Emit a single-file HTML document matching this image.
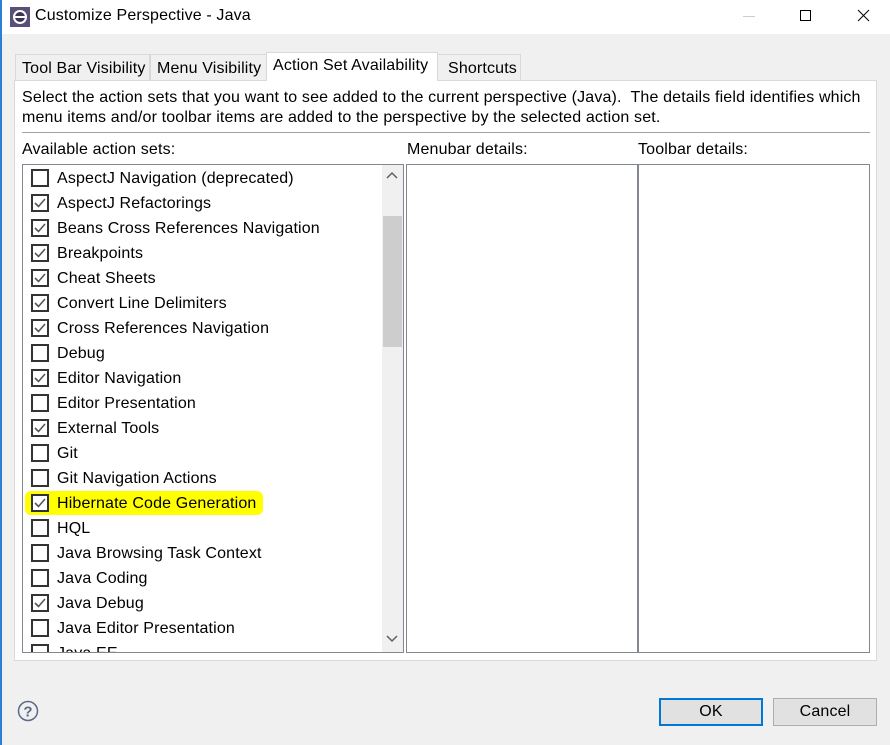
<!DOCTYPE html>
<html><head><meta charset="utf-8">
<style>
*{box-sizing:border-box;margin:0;padding:0}
body{width:890px;height:745px;background:#f0f0f0;font-family:"Liberation Sans","Noto Sans CJK SC",sans-serif;font-size:16px;letter-spacing:0.15px;color:#000;position:relative;overflow:hidden}
.abs{position:absolute}
.title{left:0;top:0;width:890px;height:34px;background:#fff}
.blue{left:0;top:0;width:2px;height:745px;background:#2b7fd6}
.tab{position:absolute;top:54px;height:27px;background:#f0f0f0;border:1px solid #d9d9d9;border-bottom:none;padding:5px 0 0 6px;white-space:nowrap}
.tab.sel{top:52px;height:29px;background:#fff;padding-top:4px;z-index:2}
.panel{left:14px;top:80px;width:863px;height:581px;background:#fff;border:1px solid #d9d9d9}
.row{position:absolute;left:31px;height:25px;white-space:nowrap}
.cb{position:absolute;left:0;top:0;width:18px;height:18px;border:2px solid #333;background:#fff}
.cb svg{position:absolute;left:0;top:0}
.lbl{position:absolute;left:26px;top:1px}
.btn{position:absolute;top:698px;width:104px;height:28px;background:#e1e1e1;border:1px solid #adadad;text-align:center;line-height:26px}
</style></head><body>
<div class="abs title"></div>
<div class="abs blue"></div>
<svg class="abs" style="left:10px;top:7px" width="20" height="20" viewBox="0 0 20 20"><rect x="0" y="0" width="20" height="20" fill="#5a4e7a"/><circle cx="10" cy="10" r="7" fill="#fff"/><circle cx="10" cy="10" r="5" fill="#3b3556"/><rect x="4" y="9" width="12" height="2" fill="#fff"/></svg>
<div class="abs" style="left:35px;top:7px;font-size:16px">Customize Perspective - Java</div>
<div class="abs" style="left:743px;top:16px;width:12px;height:1px;background:#ccc"></div>
<div class="abs" style="left:800px;top:10px;width:11px;height:11px;border:1px solid #000"></div>
<svg class="abs" style="left:857px;top:9px" width="13" height="13"><path d="M1 1L12 12M12 1L1 12" stroke="#000" stroke-width="1"/></svg>

<div class="tab" style="left:15px;width:135px">Tool Bar Visibility</div>
<div class="tab" style="left:150px;width:117px">Menu Visibility</div>
<div class="tab sel" style="left:266px;width:172px">Action Set Availability</div>
<div class="tab" style="left:437px;width:84px;padding-left:10px">Shortcuts</div>

<div class="abs panel"></div>
<div class="abs" style="left:22px;top:88px;line-height:20px;width:860px;white-space:nowrap">Select the action sets that you want to see added to the current perspective (Java).&nbsp; The details field identifies which<br>menu items and/or toolbar items are added to the perspective by the selected action set.</div>
<div class="abs" style="left:22px;top:132px;width:848px;height:1px;background:#a0a0a0"></div>
<div class="abs" style="left:22px;top:141px">Available action sets:</div>
<div class="abs" style="left:407px;top:141px">Menubar details:</div>
<div class="abs" style="left:638px;top:141px">Toolbar details:</div>

<div class="abs" style="left:22px;top:164px;width:382px;height:489px;border:1px solid #828790;background:#fff;overflow:hidden">
<div class="abs" style="left:359px;top:0;width:21px;height:487px;background:#f0f0f0"></div>
<div class="abs" style="left:360px;top:51px;width:19px;height:131px;background:#cdcdcd"></div>
<svg class="abs" style="left:363px;top:6px" width="12" height="8"><path d="M1 7L6 2L11 7" fill="none" stroke="#606060" stroke-width="1.5"/></svg>
<svg class="abs" style="left:363px;top:470px" width="12" height="8"><path d="M1 1L6 6L11 1" fill="none" stroke="#606060" stroke-width="1.5"/></svg>
</div>
<div class="abs" style="left:406px;top:164px;width:232px;height:489px;border:1px solid #828790;background:#fff"></div>
<div class="abs" style="left:637px;top:164px;width:233px;height:489px;border:1px solid #828790;border-left:2px solid #828790;background:#fff"></div>

<div class="abs" style="left:25px;top:491px;width:238px;height:24px;background:#ffff00;border-radius:6px"></div>

<div id="list"></div>
<script>
var items=[["AspectJ Navigation (deprecated)",0],["AspectJ Refactorings",1],["Beans Cross References Navigation",1],["Breakpoints",1],["Cheat Sheets",1],["Convert Line Delimiters",1],["Cross References Navigation",1],["Debug",0],["Editor Navigation",1],["Editor Presentation",0],["External Tools",1],["Git",0],["Git Navigation Actions",0],["Hibernate Code Generation",1],["HQL",0],["Java Browsing Task Context",0],["Java Coding",0],["Java Debug",1],["Java Editor Presentation",0],["Java EE",0]];
var h="";
items.forEach(function(it,i){
 var top=169+i*25;
 var clip=i==19?'style="top:'+top+'px;height:'+(652-top)+'px;overflow:hidden;width:340px"':'style="top:'+top+'px"';
 h+='<div class="row" '+clip+'><div class="cb">'+(it[1]?'<svg width="14" height="14"><path d="M2 7L5.5 10.5L12 3" fill="none" stroke="#555" stroke-width="1.6"/></svg>':'')+'</div><div class="lbl">'+it[0]+'</div></div>';
});
document.getElementById("list").innerHTML=h;
</script>

<svg class="abs" style="left:17px;top:700px" width="22" height="22"><circle cx="11" cy="11" r="9.5" fill="none" stroke="#5a6a86" stroke-width="1.5"/><text x="11" y="16.5" text-anchor="middle" font-family="Liberation Sans" font-weight="bold" font-size="15" fill="#5a6a86">?</text></svg>
<div class="btn" style="left:659px;border:2px solid #0078d7;line-height:24px">OK</div>
<div class="btn" style="left:773px">Cancel</div>
</body></html>
